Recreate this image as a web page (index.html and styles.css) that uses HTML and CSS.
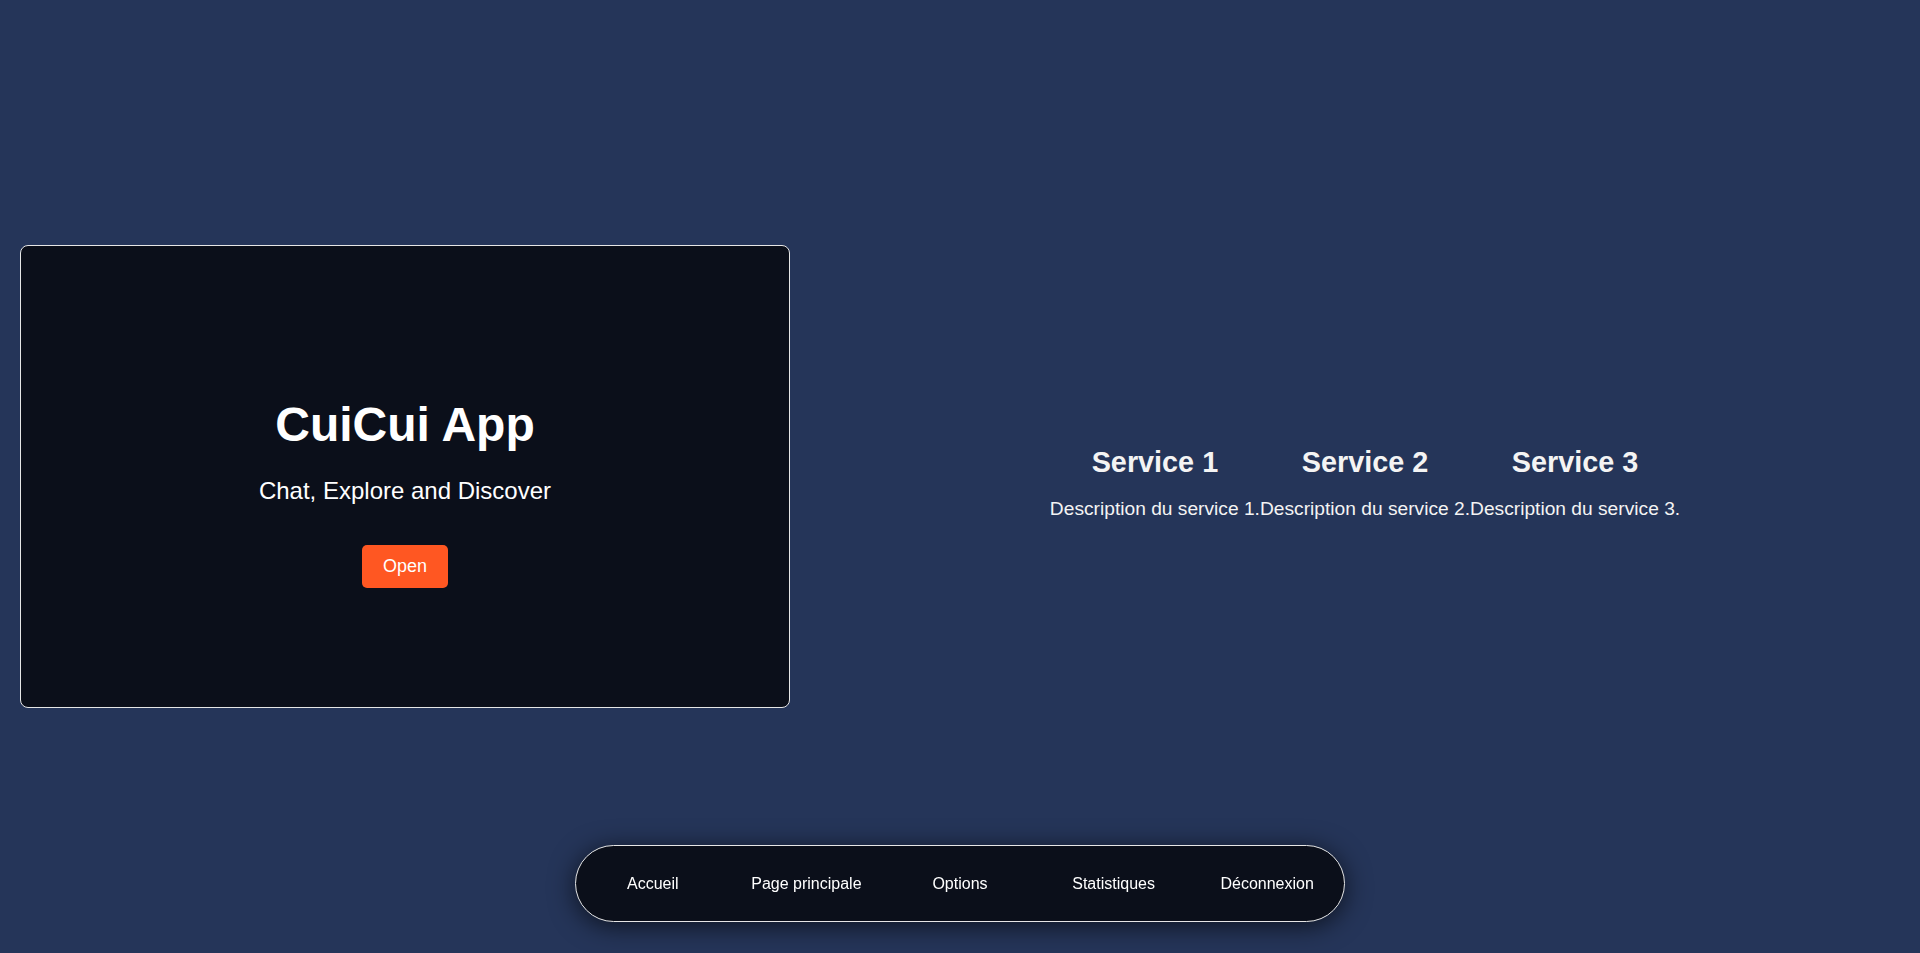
FILE: index.html
```html
<!DOCTYPE html>
<html lang="fr">
<head>
<meta charset="utf-8">
<title>CuiCui App</title>
<link rel="stylesheet" href="styles.css">
</head>
<body>
<main class="page">
  <section class="hero">
    <h1 class="hero-title">CuiCui App</h1>
    <p class="hero-sub">Chat, Explore and Discover</p>
    <button class="hero-btn">Open</button>
  </section>
  <section class="services">
    <div class="service">
      <h3 class="service-title">Service 1</h3>
      <p class="service-desc">Description du service 1.</p>
    </div>
    <div class="service">
      <h3 class="service-title">Service 2</h3>
      <p class="service-desc">Description du service 2.</p>
    </div>
    <div class="service">
      <h3 class="service-title">Service 3</h3>
      <p class="service-desc">Description du service 3.</p>
    </div>
  </section>
</main>
<nav class="navbar">
  <a class="nav-item">Accueil</a>
  <a class="nav-item">Page principale</a>
  <a class="nav-item">Options</a>
  <a class="nav-item">Statistiques</a>
  <a class="nav-item">Déconnexion</a>
</nav>
</body>
</html>
```
FILE: styles.css
```css
* { box-sizing: border-box; }
html, body {
  margin: 0;
  padding: 0;
}
body {
  background: #253559;
  color: #ffffff;
  font-family: "Liberation Sans", Arial, sans-serif;
  height: 100vh;
  overflow: hidden;
}
.page {
  display: flex;
  align-items: center;
  height: 100vh;
}
.hero {
  width: 770px;
  height: 463px;
  margin: 0 20px;
  background: #0b0f1a;
  border: 1px solid #e6e6e6;
  border-radius: 8px;
  display: flex;
  flex-direction: column;
  align-items: center;
  justify-content: center;
  text-align: center;
}
.hero-title {
  font-size: 48px;
  font-weight: bold;
  margin: 32px 0 25px;
}
.hero-sub {
  font-size: 24px;
  margin: 0 0 40px;
}
.hero-btn {
  background: #ff5722;
  color: #ffffff;
  border: none;
  border-radius: 5px;
  font-family: "Liberation Sans", Arial, sans-serif;
  font-size: 18px;
  padding: 11px 21px;
  cursor: pointer;
}
.services {
  flex: 1;
  display: flex;
  justify-content: center;
  padding-top: 12px;
}
.service {
  text-align: center;
  color: #f4f4f4;
}
.service-title {
  font-size: 28.8px;
  font-weight: bold;
  margin: 0 0 19px;
}
.service-desc {
  font-size: 19.2px;
  margin: 0;
}
.navbar {
  position: fixed;
  left: 50%;
  bottom: 31px;
  transform: translateX(-50%);
  width: 770px;
  height: 77px;
  background: #0b0f1a;
  border: 1px solid #e6e6e6;
  border-radius: 39px;
  box-shadow: 0 4px 26px rgba(0, 0, 0, 0.65);
  display: flex;
  align-items: center;
}
.nav-item {
  flex: 1;
  text-align: center;
  font-size: 16px;
  color: #ffffff;
  text-decoration: none;
  cursor: pointer;
}
```
